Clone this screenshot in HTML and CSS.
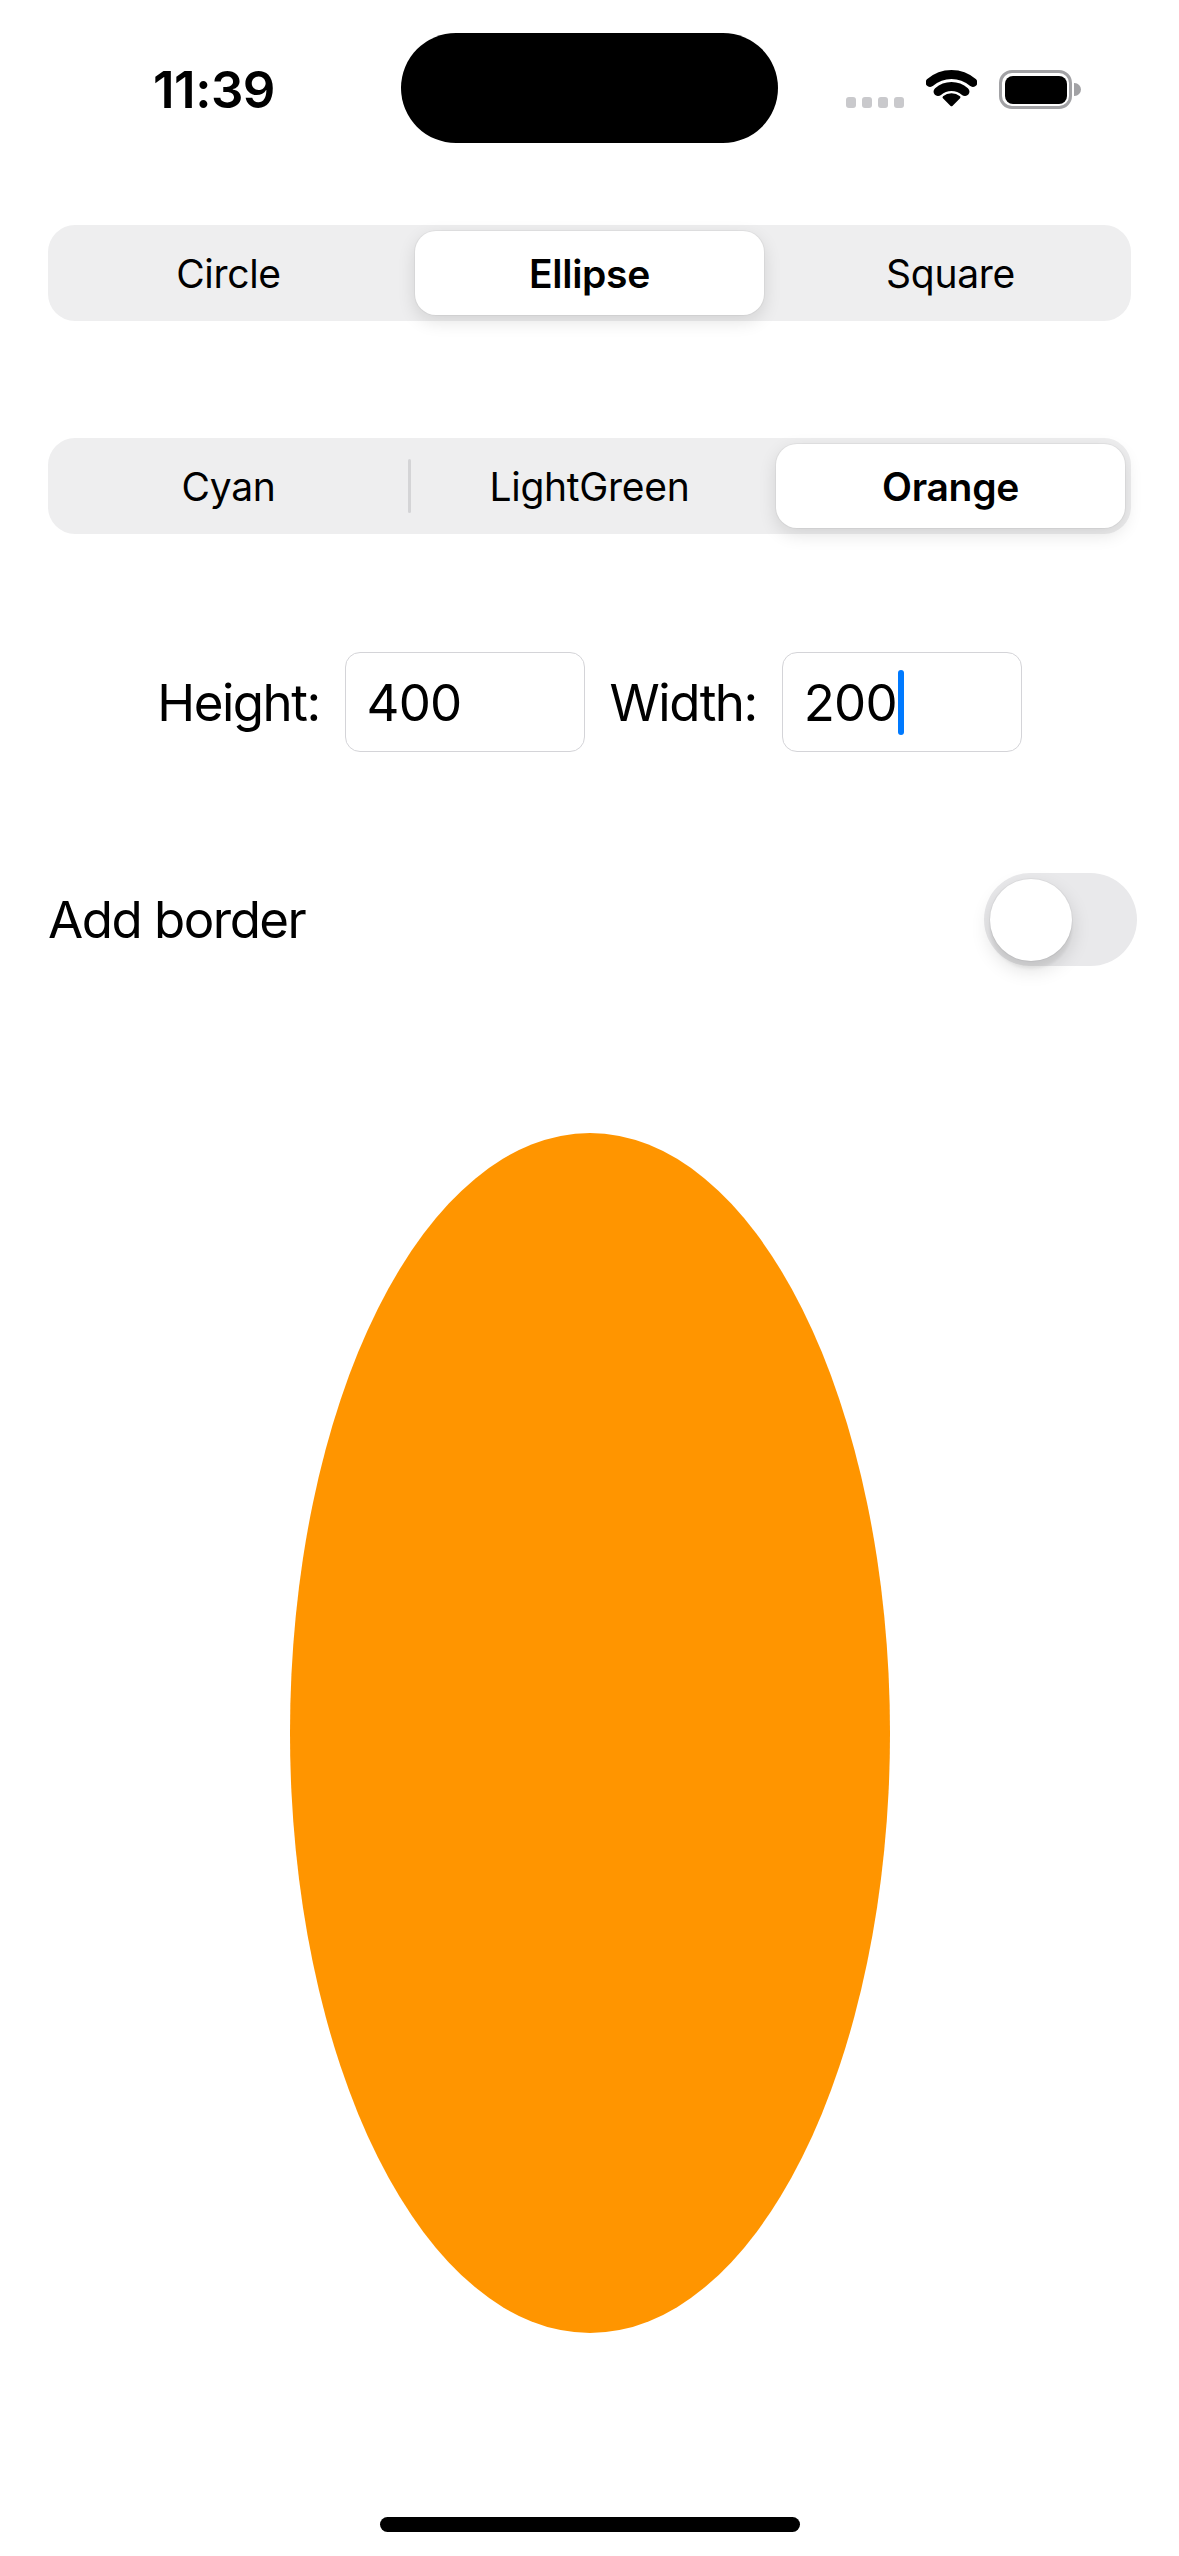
FILE: index.html
```html
<!DOCTYPE html>
<html lang="en">
<head>
<meta charset="utf-8">
<title>Shapes</title>
<link rel="stylesheet" href="styles.css">
</head>
<body>
<div class="screen">
  <header class="status-bar">
    <span class="time">11:39</span>
    <div class="status-icons">
      <div class="signal"><i></i><i></i><i></i><i></i></div>
      <svg class="wifi" width="51" height="38" viewBox="0 0 51 38">
        <path d="M4.18 13.47 A32.5 32.5 0 0 1 46.82 13.47" fill="none" stroke="#000" stroke-width="9" stroke-linecap="round"/>
        <path d="M12.05 22.53 A20.5 20.5 0 0 1 38.95 22.53" fill="none" stroke="#000" stroke-width="9" stroke-linecap="round"/>
        <path d="M25.5 36 L17.8 28.3 A12 12 0 0 1 33.2 28.3 Z" fill="#000" stroke="#000" stroke-width="2.5" stroke-linejoin="round"/>
      </svg>
      <div class="battery">
        <div class="battery-body"><div class="battery-fill"></div></div>
        <div class="battery-cap"></div>
      </div>
    </div>
  </header>
  <div class="island"></div>

  <main class="content">
    <div class="segmented">
      <div class="segment">Circle</div>
      <div class="sep"></div>
      <div class="segment selected">Ellipse</div>
      <div class="sep"></div>
      <div class="segment">Square</div>
    </div>

    <div class="segmented second">
      <div class="segment">Cyan</div>
      <div class="sep"><span class="line"></span></div>
      <div class="segment">LightGreen</div>
      <div class="sep"></div>
      <div class="segment selected">Orange</div>
    </div>

    <div class="dims">
      <span class="label">Height:</span>
      <div class="field">400</div>
      <span class="label">Width:</span>
      <div class="field">200<span class="cursor"></span></div>
    </div>

    <div class="toggle-row">
      <span class="label">Add border</span>
      <div class="toggle"><div class="knob"></div></div>
    </div>

    <div class="shape-area">
      <div class="ellipse"></div>
    </div>
  </main>

  <div class="home-indicator"></div>
</div>
</body>
</html>
```

FILE: styles.css
```css
* { box-sizing: border-box; }

html, body {
  margin: 0;
  padding: 0;
  background: #ffffff;
}

body {
  font-family: Inter, "Noto Sans", "Liberation Sans", sans-serif;
  color: #000;
}

.screen {
  position: relative;
  width: 1179px;
  height: 2556px;
  overflow: hidden;
  background: #fff;
}

/* Status bar */
.status-bar {
  height: 178px;
  display: flex;
  align-items: center;
  justify-content: space-between;
  padding: 0 98px 0 153px;
}

.time {
  font-size: 51px;
  font-weight: 600;
  letter-spacing: -0.5px;
  line-height: 1;
}

.status-icons {
  display: flex;
  align-items: flex-end;
  gap: 22px;
}

.signal {
  display: flex;
  gap: 6px;
  margin-bottom: 1px;
}

.signal i {
  display: block;
  width: 10px;
  height: 11px;
  border-radius: 3px;
  background: #c9c9cc;
}

.wifi {
  display: block;
  margin-bottom: 2px;
}

.battery {
  display: flex;
  align-items: center;
  gap: 2px;
}

.battery-body {
  width: 73px;
  height: 39px;
  border: 3.5px solid #a2a2a5;
  border-radius: 13px;
  padding: 2.5px;
}

.battery-fill {
  width: 100%;
  height: 100%;
  background: #000;
  border-radius: 8px;
}

.battery-cap {
  width: 7px;
  height: 13px;
  border-radius: 0 7px 7px 0;
  background: #a2a2a5;
}

.island {
  position: absolute;
  left: 401px;
  top: 33px;
  width: 377px;
  height: 110px;
  border-radius: 55px;
  background: #000;
}

/* Content */
.content {
  padding: 0 48px;
}

.segmented {
  margin-top: 47px;
  height: 96px;
  padding: 6px;
  display: flex;
  background: #eeeeef;
  border-radius: 27px;
}

.segmented.second {
  margin-top: 117px;
}

.segment {
  flex: 1;
  display: flex;
  align-items: center;
  justify-content: center;
  font-size: 39px;
  font-weight: 400;
  border-radius: 21px;
  letter-spacing: -0.3px;
}

.segment.selected {
  background: #fff;
  font-weight: 600;
  box-shadow: 0 0 0 1px rgba(0, 0, 0, 0.04), 0 6px 18px rgba(0, 0, 0, 0.12);
}

.sep {
  width: 12px;
  display: flex;
  align-items: center;
  justify-content: center;
}

.sep .line {
  display: block;
  width: 3px;
  height: 54px;
  border-radius: 2px;
  background: #d4d4d6;
}

.dims {
  margin-top: 118px;
  display: flex;
  align-items: center;
  justify-content: center;
  gap: 25px;
}

.label {
  font-size: 51px;
  font-weight: 400;
  letter-spacing: -1.5px;
}

.field {
  width: 240px;
  height: 100px;
  border: 1.5px solid #d4d4d8;
  border-radius: 15px;
  padding-left: 21px;
  display: flex;
  align-items: center;
  font-size: 51px;
  letter-spacing: -0.8px;
}

.cursor {
  display: block;
  width: 6px;
  height: 65px;
  border-radius: 3px;
  background: #007aff;
  margin-left: 1px;
}

.toggle-row {
  margin-top: 121px;
  margin-right: -6px;
  display: flex;
  align-items: center;
  justify-content: space-between;
}

.toggle {
  width: 153px;
  height: 93px;
  border-radius: 47px;
  background: #e9e9eb;
  padding: 0 6px;
  display: flex;
  align-items: center;
}

.knob {
  width: 82px;
  height: 82px;
  border-radius: 50%;
  background: #fff;
  box-shadow: 0 0 0 1px rgba(0, 0, 0, 0.04), 0 8px 20px rgba(0, 0, 0, 0.14), 0 8px 3px rgba(0, 0, 0, 0.05);
}

.shape-area {
  margin-top: 167px;
  display: flex;
  justify-content: center;
}

.ellipse {
  width: 600px;
  height: 1200px;
  border-radius: 50%;
  background: #ff9500;
}

.home-indicator {
  position: absolute;
  left: 380px;
  bottom: 24px;
  width: 420px;
  height: 15px;
  border-radius: 8px;
  background: #000;
}
```
